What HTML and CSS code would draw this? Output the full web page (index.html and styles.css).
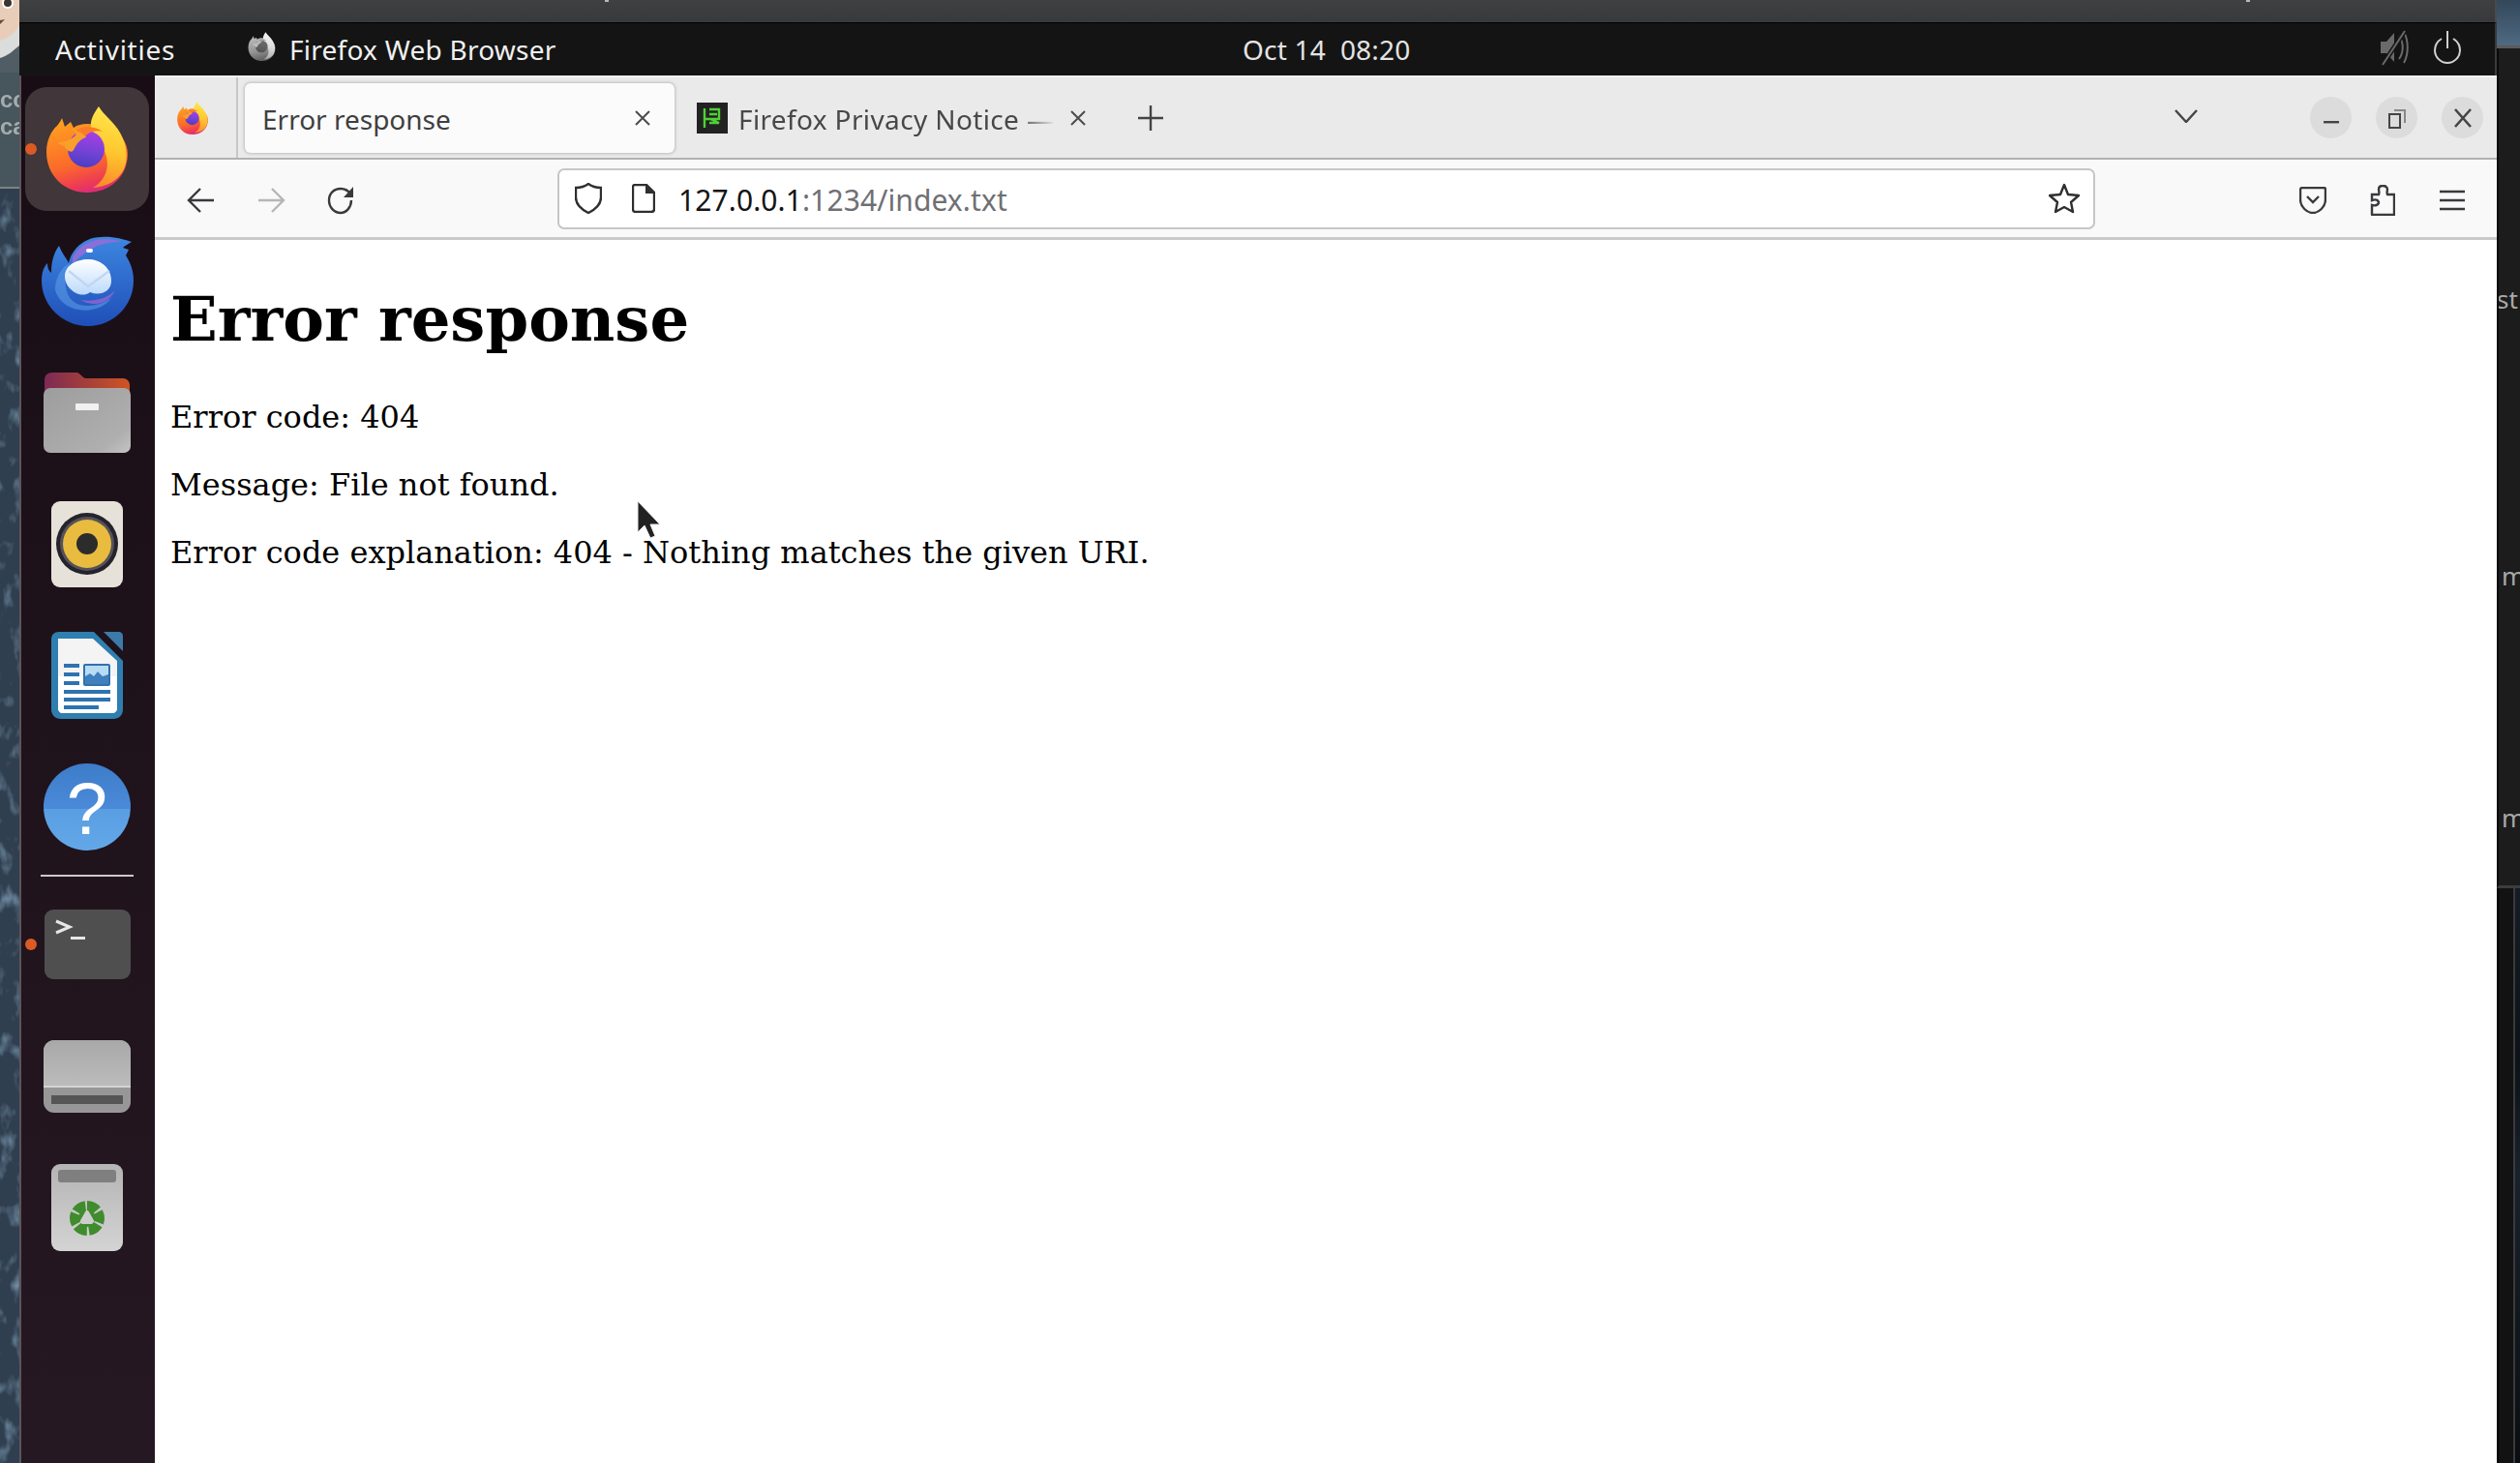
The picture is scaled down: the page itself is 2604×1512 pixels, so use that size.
FILE: index.html
```html
<!DOCTYPE html>
<html lang="en">
<head>
<meta charset="utf-8">
<title>Error response</title>
<link rel="stylesheet" href="styles.css">
</head>
<body>
<svg class="defs" width="0" height="0" aria-hidden="true">
  <defs>
    <linearGradient id="fxBody" x1="0.3" y1="0" x2="0.6" y2="1">
      <stop offset="0" stop-color="#ffa01f"/><stop offset="0.58" stop-color="#fb6a2a"/><stop offset="0.86" stop-color="#ee3a55"/><stop offset="1" stop-color="#d82a80"/>
    </linearGradient>
    <linearGradient id="fxFlame" x1="0.5" y1="0" x2="0.4" y2="1">
      <stop offset="0" stop-color="#ffe94d"/><stop offset="0.55" stop-color="#ffc62e"/><stop offset="1" stop-color="#fb8a2a"/>
    </linearGradient>
    <linearGradient id="fxGlobe" x1="0.6" y1="0" x2="0.4" y2="1">
      <stop offset="0" stop-color="#a83fe6"/><stop offset="0.55" stop-color="#7542d6"/><stop offset="1" stop-color="#4a3ec2"/>
    </linearGradient>
    <linearGradient id="tbBody" x1="0.5" y1="0" x2="0.5" y2="1">
      <stop offset="0" stop-color="#3d86e0"/><stop offset="1" stop-color="#1f4fb8"/>
    </linearGradient>
    <linearGradient id="tbMail" x1="0.5" y1="0" x2="0.5" y2="1">
      <stop offset="0" stop-color="#ffffff"/><stop offset="1" stop-color="#bcd9fb"/>
    </linearGradient>
    <linearGradient id="filesTab" x1="0" y1="0" x2="1" y2="0">
      <stop offset="0" stop-color="#7c2a54"/><stop offset="1" stop-color="#cf5422"/>
    </linearGradient>
    <linearGradient id="filesFront" x1="0" y1="0" x2="1" y2="1">
      <stop offset="0" stop-color="#9d9d9d"/><stop offset="0.8" stop-color="#afafaf"/><stop offset="1" stop-color="#c4c4c4"/>
    </linearGradient>
    <linearGradient id="helpDisc" x1="0.5" y1="0" x2="0.5" y2="1">
      <stop offset="0" stop-color="#3d7cc9"/><stop offset="0.52" stop-color="#4a8ad8"/><stop offset="0.52" stop-color="#5a9ee2"/><stop offset="1" stop-color="#62a8e8"/>
    </linearGradient>
    <linearGradient id="diskTop" x1="0.5" y1="0" x2="0.5" y2="1">
      <stop offset="0" stop-color="#a8a8a8"/><stop offset="1" stop-color="#bcbcbc"/>
    </linearGradient>
    <linearGradient id="trashBody" x1="0.5" y1="0" x2="0.5" y2="1">
      <stop offset="0" stop-color="#b4b4b4"/><stop offset="1" stop-color="#d4d4d4"/>
    </linearGradient>
    <symbol id="firefox" viewBox="0 0 84 90">
      <path fill="url(#fxBody)" d="M16 13 L19 22 L25 17 L28 23 C32 20 37 19 42 19 C64 19 84 30 84 50 C84 74 65 90 42 90 C18 90 0 72 0 48 C0 36 5 26 11 21 C13 18 15 16 16 13Z"/>
      <path fill="url(#fxFlame)" d="M54 1 C59 10 70 17 76 28 C83 40 85 54 80 66 C74 78 62 84 48 85 C60 78 65 66 62 53 C58 38 48 32 46 22 C45 14 50 7 54 1Z"/>
      <circle cx="41" cy="45" r="19" fill="url(#fxGlobe)"/>
      <path fill="#f9a02a" d="M11 39 C18 37 25 36 30 31 C32 28 28 25 25 24 C32 24 39 27 41 33 C34 35 32 39 28 46 C26 50 21 46 19 43 C17 41 14 40 11 39Z"/>
      <path fill="#fb7c28" d="M30 26 C36 22 48 20 58 27 C51 25 44 27 40 32 C38 29 34 27 30 26Z"/>
    </symbol>
    <symbol id="bell-muted" viewBox="0 0 30 38">
      <path fill="#6a6a6a" d="M1 13 H7 L15 4 V34 L7 25 H1Z"/>
      <path fill="none" stroke="#6a6a6a" stroke-width="2" d="M20 7 C25 14 25 24 20 31 M25 3 C30 12 30 26 25 35"/>
      <path fill="none" stroke="#141414" stroke-width="5" d="M3 37 L26 2"/>
      <path fill="none" stroke="#6a6a6a" stroke-width="2" d="M3 37 L26 2"/>
    </symbol>
  </defs>
</svg>

<div class="screen">
  <aside class="left-edge">
    <div class="left-card">
      <svg class="avatar" viewBox="0 0 20 75" width="20" height="75">
        <rect width="20" height="75" fill="#dbdcdc"/>
        <path fill="#e8cdb8" d="M0 0 H20 V26 C16 34 8 40 0 42Z"/>
        <circle cx="8" cy="3" r="6" fill="#fff"/><circle cx="8" cy="3" r="4" fill="#3b3430"/>
        <path fill="#5b4a42" d="M0 21 L5 20 L0 25Z"/>
        <path fill="#505d64" d="M20 47 V75 H0 V60 C8 58 14 52 20 47Z"/>
      </svg>
      <p class="left-word">cc</p>
      <p class="left-word">ca</p>
    </div>
    <svg class="foliage" width="20" height="1317">
      <filter id="leafNoise" x="0" y="0" width="100%" height="100%">
        <feTurbulence type="fractalNoise" baseFrequency="0.09 0.045" numOctaves="3" seed="8"/>
        <feColorMatrix type="matrix" values="0 0 0 0 0.03  0 0 0 0 0.05  0 0 0 0 0.08  0 0 0 0 1"/>
      </filter>
      <filter id="leafHigh" x="0" y="0" width="100%" height="100%">
        <feTurbulence type="fractalNoise" baseFrequency="0.07 0.04" numOctaves="3" seed="23"/>
        <feColorMatrix type="matrix" values="0 0 0 0 0.16  0 0 0 0 0.26  0 0 0 0 0.36  2.6 0 0 0 -1.4"/>
      </filter>
      <rect width="20" height="1317" filter="url(#leafNoise)"/>
      <rect width="20" height="1317" filter="url(#leafHigh)"/>
    </svg>
  </aside>

  <div class="center">
    <div class="strip">
      <span class="strip-mark strip-mark-a"></span>
      <span class="strip-mark strip-mark-b"></span>
    </div>
    <header class="topbar">
      <div class="topbar-left">
        <span class="activities">Activities</span>
        <span class="appmenu">
          <svg class="appmenu-icon" width="29" height="30"><use href="#firefox"/></svg>
          <span class="appmenu-name">Firefox Web Browser</span>
        </span>
      </div>
      <span class="clock">Oct 14&nbsp; 08:20</span>
      <div class="tray">
        <svg width="30" height="38"><use href="#bell-muted"/></svg>
        <svg width="28" height="36" viewBox="0 0 28 36" fill="none" stroke="#cfcfcf" stroke-width="2">
          <path d="M8 9 C3 12 1 16 1 21 C1 28 7 34 14 34 C21 34 27 28 27 21 C27 16 25 12 20 9"/>
          <path d="M14 1 V19"/>
        </svg>
      </div>
    </header>

    <div class="work">
      <nav class="dock">
        <div class="slot">
          <span class="run-dot"></span>
          <div class="fx-tile"><svg width="84" height="90"><use href="#firefox"/></svg></div>
        </div>
        <div class="slot">
          <svg width="95" height="93" viewBox="0 0 95 93">
            <path fill="url(#tbBody)" d="M18 10 C21 18 26 23 28 28 C30 16 42 1 62 1 C72 0 84 3 93 6 C88 9 86 10 84 12 L90 14 L87 20 C92 28 95 36 95 46 C95 72 74 93 48 93 C22 93 0 72 0 46 C0 38 2 32 6 28 C6 34 8 36 10 38 C10 28 12 18 18 10Z"/>
            <path fill="#8a6fd8" d="M32 22 C38 10 50 4 64 3 C72 3 78 4 82 6 C70 6 60 8 52 13 C46 17 38 21 32 30Z"/>
            <path fill="#5fa0ea" d="M14 56 C14 42 22 30 30 28 C24 36 22 50 28 62 C36 76 58 74 72 64 C60 82 22 82 14 56Z" opacity="0.55"/>
            <rect x="46" y="13" width="7" height="4" rx="2" fill="#fff"/>
            <path fill="url(#tbMail)" d="M24 42 C24 30 36 24 48 24 C60 24 72 32 72 46 C72 58 60 62 50 58 C40 66 24 54 24 42Z"/>
            <path fill="none" stroke="#c0d6f3" stroke-width="2.4" d="M28 36 L48 52 L70 36"/>
            <path fill="#7f63d2" d="M40 66 C52 68 66 66 76 56 C70 70 54 74 40 66Z"/>
          </svg>
        </div>
        <div class="slot">
          <svg width="90" height="83" viewBox="0 0 90 83">
            <path fill="url(#filesTab)" d="M1 8 C1 3 4 0 9 0 H34 C38 0 40 6 44 6 H82 C86 6 89 9 89 13 V30 H1Z"/>
            <rect x="0" y="16" width="90" height="67" rx="7" fill="url(#filesFront)"/>
            <rect x="33" y="32" width="24" height="7" rx="1" fill="#f1f1f1"/>
          </svg>
        </div>
        <div class="slot">
          <svg width="74" height="89" viewBox="0 0 74 89">
            <rect width="74" height="89" rx="9" fill="#e6e2da"/>
            <circle cx="37" cy="44" r="32" fill="#25232b"/>
            <circle cx="37" cy="44" r="28" fill="#55525a"/>
            <circle cx="37" cy="44" r="25" fill="#e9bc3f"/>
            <circle cx="37" cy="44" r="11" fill="#2d2c2c"/>
          </svg>
        </div>
        <div class="slot">
          <svg width="74" height="90" viewBox="0 0 74 90">
            <path fill="#2f7eb0" d="M8 0 H44 L74 30 V80 C74 86 70 90 64 90 H10 C4 90 0 86 0 80 V8 C0 3 3 0 8 0Z"/>
            <path fill="#3c7aa9" d="M54 0 H70 C72 0 74 2 74 4 V20Z"/>
            <path fill="#f4f4f4" d="M7 7 H43 L68 30 V78 C68 82 66 84 62 84 H12 C9 84 7 82 7 78Z"/>
            <path fill="#fff" d="M7 46 H68 V78 C68 82 66 84 62 84 H12 C9 84 7 82 7 78Z"/>
            <path fill="#2f72b0" d="M13 34 H29 V38 H13Z M13 43 H29 V47 H13Z M13 52 H29 V56 H13Z M13 61 H61 V65 H13Z M13 69 H61 V73 H13Z M13 77 H49 V81 H13Z" transform="translate(0,-1)"/>
            <rect x="34" y="34" width="26" height="21" rx="1" fill="#b9dcf5" stroke="#2f72b0" stroke-width="2"/>
            <path fill="#3f7fbb" d="M35 54 V46 L40 43 L44 46 L48 41 L53 46 L59 44 V54Z"/>
          </svg>
        </div>
        <div class="slot">
          <svg width="90" height="90" viewBox="0 0 90 90">
            <circle cx="45" cy="45" r="45" fill="url(#helpDisc)"/>
            <text class="help-mark" x="45" y="73" text-anchor="middle">?</text>
          </svg>
        </div>
        <div class="dock-sep"></div>
        <div class="slot">
          <span class="run-dot"></span>
          <svg width="89" height="72" viewBox="0 0 89 72">
            <rect width="89" height="72" rx="9" fill="#4f4f4f"/>
            <path fill="none" stroke="#e6e6e6" stroke-width="3" d="M12 12 L26 18 L12 24"/>
            <rect x="27" y="28" width="15" height="3" fill="#e6e6e6"/>
          </svg>
        </div>
        <div class="slot">
          <svg width="90" height="75" viewBox="0 0 90 75">
            <rect width="90" height="75" rx="11" fill="#979797"/>
            <path fill="url(#diskTop)" d="M11 0 H79 C85 0 90 5 90 11 V48 H0 V11 C0 5 5 0 11 0Z"/>
            <rect y="47" width="90" height="2" fill="#d4d4d4"/>
            <rect x="8" y="57" width="74" height="9" fill="#555"/>
          </svg>
        </div>
        <div class="slot">
          <svg width="74" height="90" viewBox="0 0 74 90">
            <rect width="74" height="90" rx="9" fill="url(#trashBody)"/>
            <rect x="7" y="6" width="60" height="13" rx="3" fill="#7f7f7f"/>
            <circle cx="37" cy="56" r="9" fill="#3f8c2d"/>
            <path fill="#cdcdcd" d="M37 46 L46 62 H28Z"/>
            <circle cx="37" cy="56" r="13" fill="none" stroke="#3f8c2d" stroke-width="10" stroke-dasharray="11.4 2.2" transform="rotate(-90 37 56)"/>
          </svg>
        </div>
      </nav>

      <main class="window">
        <div class="tabbar">
          <div class="view-btn"><svg width="32" height="34"><use href="#firefox"/></svg></div>
          <div class="tab tab-active">
            <span class="tab-title">Error response</span>
            <svg class="tab-x" width="18" height="18" viewBox="0 0 18 18"><path d="M2 2 L16 16 M16 2 L2 16"/></svg>
          </div>
          <div class="tab tab-other">
            <svg class="favicon" width="32" height="32" viewBox="0 0 32 32">
              <rect width="32" height="32" fill="#222"/>
              <path fill="none" stroke="#4fd035" stroke-width="2.4" d="M8 6 V26 M8 17 H23 V7 H13 M13 12 H21 M14 17 L23 21 H13"/>
            </svg>
            <span class="tab-title tab-title-fade">Firefox Privacy Notice —</span>
            <svg class="tab-x" width="18" height="18" viewBox="0 0 18 18"><path d="M2 2 L16 16 M16 2 L2 16"/></svg>
          </div>
          <svg class="new-tab" width="26" height="26" viewBox="0 0 26 26"><path d="M13 0 V26 M0 13 H26"/></svg>
          <svg class="tab-list" width="24" height="14" viewBox="0 0 24 14"><path d="M1 1 L12 13 L23 1"/></svg>
          <div class="win-btn win-btn-first">
            <svg width="16" height="16" viewBox="0 0 16 16"><rect y="11" width="16" height="2.4"/></svg>
          </div>
          <div class="win-btn">
            <svg width="18" height="22" viewBox="0 0 18 22" fill="none" stroke="#444" stroke-width="2"><rect x="1" y="7" width="11" height="14"/><path d="M6 3 H17 V16" stroke="#888"/></svg>
          </div>
          <div class="win-btn">
            <svg width="18" height="20" viewBox="0 0 18 20" fill="none" stroke="#444" stroke-width="2.6"><path d="M1 1 L17 19 M17 1 L1 19"/></svg>
          </div>
        </div>

        <div class="toolbar">
          <button class="tool tool-first"><svg width="30" height="28" viewBox="0 0 30 28"><path d="M28 14 H3 M14 2 L2 14 L14 26"/></svg></button>
          <button class="tool tool-off"><svg width="30" height="28" viewBox="0 0 30 28"><path d="M2 14 H27 M16 2 L28 14 L16 26"/></svg></button>
          <button class="tool"><svg width="28" height="30" viewBox="0 0 28 30"><path d="M25 15 C25 22 20 28 14 28 C7 28 2 22 2 15 C2 8 7 3 14 3 C19 3 22 5 25 9"/><path class="solid" d="M27 1 V12 H17Z"/></svg></button>
          <div class="urlbar">
            <svg class="url-shield" width="28" height="32" viewBox="0 0 28 32"><path d="M14 1 C18 4 22 5 27 5 V15 C27 23 20 28 14 31 C8 28 1 23 1 15 V5 C6 5 10 4 14 1Z"/></svg>
            <svg class="url-page" width="24" height="30" viewBox="0 0 24 30"><path d="M3 1 H15 L23 9 V26 C23 28 22 29 20 29 H4 C2 29 1 28 1 26 V3 C1 2 2 1 3 1Z"/><path class="solid" d="M14 1 L23 10 H14Z"/></svg>
            <span class="url-text"><span class="url-host">127.0.0.1</span>:1234/index.txt</span>
            <svg class="url-star" width="32" height="32" viewBox="0 0 32 32"><path d="M16 2 L20 12 L31 13 L23 20 L25 30 L16 25 L7 30 L9 20 L1 13 L12 12Z"/></svg>
          </div>
          <button class="tool tool-pocket"><svg width="28" height="28" viewBox="0 0 28 28"><path d="M3 1 H25 C26 1 27 2 27 3 V13 C27 21 20 27 14 27 C8 27 1 21 1 13 V3 C1 2 2 1 3 1Z"/><path d="M8 10 L14 16 L20 10"/></svg></button>
          <button class="tool"><svg width="26" height="32" viewBox="0 0 26 32"><path d="M1 31 H25 V10 H18 C17 8 18 6 18 5 C18 2 16 1 13 1 C10 1 9 2 9 5 C9 6 10 8 9 10 H2 V16 C5 15 8 15 9 18 C9 21 5 22 2 21 V31Z"/></svg></button>
          <button class="tool"><svg width="26" height="24" viewBox="0 0 26 24"><path d="M0 3 H26 M0 12 H26 M0 21 H26"/></svg></button>
        </div>

        <article class="page">
          <h1 class="page-title">Error response</h1>
          <p class="page-line">Error code: 404</p>
          <p class="page-line">Message: File not found.</p>
          <p class="page-line">Error code explanation: 404 - Nothing matches the given URI.</p>
          <svg class="cursor" width="26" height="42" viewBox="0 0 26 42"><path d="M1 1 V33 L8 26 L14 39 L19 37 L14 25 H24Z"/></svg>
        </article>
      </main>
    </div>
  </div>

  <aside class="right-edge">
    <div class="right-photo"></div>
    <div class="right-panel">
      <span class="right-word right-word-st">st</span>
      <span class="right-word right-word-m1">m</span>
      <span class="right-word right-word-m2">m</span>
    </div>
    <div class="right-bottom">
      <div class="right-bottom-dark"></div>
      <div class="right-bottom-photo"></div>
    </div>
  </aside>
</div>
</body>
</html>
```

FILE: styles.css
```css
* { box-sizing: border-box; }
html, body { margin: 0; padding: 0; height: 100%; overflow: hidden; background: #111; }
.defs { position: absolute; }
svg { display: block; flex: none; }

.screen { display: flex; width: 2604px; height: 1512px; font-family: "Noto Sans", "Open Sans", sans-serif; }

/* left wallpaper sliver */
.left-edge { width: 20px; flex: none; display: flex; flex-direction: column; overflow: hidden; background: #0e1a28; }
.left-card { height: 195px; flex: none; background: #47555c; overflow: hidden; border-bottom: 2px solid #7b8386; }
.avatar { filter: blur(0.6px); }
.left-word { margin: 0; width: 20px; height: 28px; font-family: "Liberation Sans", sans-serif; font-size: 24px; line-height: 28px; font-weight: 700; color: #a4acaf; white-space: nowrap; overflow: hidden; filter: blur(0.5px); }
.left-word:first-of-type { margin-top: 14px; }
.foliage { flex: none; }

/* centre column */
.center { width: 2560px; flex: none; display: flex; flex-direction: column; }
.strip { height: 24px; flex: none; background: linear-gradient(#3f4042, #38393b); border-bottom: 1px solid #000; border-right: 2px solid #4a4a4b; display: flex; }
.strip-mark { width: 4px; height: 2px; background: #b8b8b8; }
.strip-mark-a { margin-left: 605px; }
.strip-mark-b { margin-left: 1692px; }

.topbar { height: 54px; flex: none; background: #141414; border-right: 2px solid #3b3b3b; display: flex; align-items: center; color: #f1f1f1; font-size: 28px; }
.topbar-left { width: 1264px; flex: none; padding-left: 37px; display: flex; align-items: center; }
.activities { width: 199px; letter-spacing: 0.75px; }
.appmenu { display: flex; align-items: center; gap: 14px; }
.appmenu-name { letter-spacing: 0.25px; }
.appmenu-icon { filter: grayscale(1) brightness(1.1); margin-top: -6px; }
.clock { color: #e4e4e4; letter-spacing: 0.2px; }
.tray { margin-left: auto; padding-right: 35px; display: flex; align-items: center; gap: 26px; margin-top: -4px; }

.work { flex: 1; display: flex; min-height: 0; }

/* dock */
.dock { width: 140px; flex: none; padding-top: 8px; display: flex; flex-direction: column; background: linear-gradient(#190d15, #251822); border-left: 2px solid #5d555a; }
.slot { width: 136px; height: 136px; flex: none; position: relative; display: flex; align-items: center; justify-content: center; }
.fx-tile { width: 128px; height: 128px; border-radius: 22px; background: #413639; display: flex; align-items: center; justify-content: center; }
.run-dot { position: absolute; left: 4px; top: 62px; width: 12px; height: 12px; border-radius: 50%; background: #dc5a25; z-index: 1; }
.dock-sep { height: 2px; width: 96px; margin: 2px 0 2px 20px; background: #cdc8ca; flex: none; }
.help-mark { font-family: "Liberation Sans", sans-serif; font-size: 76px; fill: #fff; }

/* window */
.window { flex: 1; min-width: 0; display: flex; flex-direction: column; background: #fff; }
.tabbar { height: 87px; flex: none; display: flex; align-items: center; background: #eaeaea; border-top: 2px solid #f6f6f6; border-bottom: 2px solid #b2b2b2; color: #3a3a3c; }
.view-btn { width: 86px; height: 100%; flex: none; display: flex; align-items: center; justify-content: center; border-right: 2px solid #c6c6c6; padding-right: 6px; }
.tab { display: flex; align-items: center; height: 72px; flex: none; font-size: 28px; }
.tab-active { width: 444px; margin-left: 7px; margin-top: 1px; padding: 0 24px 0 18px; background: #fbfbfb; border-radius: 6px; box-shadow: 0 0 3px 1px #bdbdbd; }
.tab-title { white-space: nowrap; margin-top: 3px; }
.tab-active .tab-title { flex: 1; margin-top: 1px; color: #3f3f42; }
.tab-other { width: 426px; padding-left: 23px; }
.favicon { margin-right: 11px; }
.tab-title-fade { width: 328px; overflow: hidden; color: #48484b; letter-spacing: 0.37px; -webkit-mask-image: linear-gradient(to right, #000 88%, transparent 100%); mask-image: linear-gradient(to right, #000 88%, transparent 100%); }
.tab-x { fill: none; stroke: #4c4c4c; stroke-width: 2; }
.tab-other .tab-x { margin-left: 14px; }
.new-tab { margin-left: 53px; fill: none; stroke: #444; stroke-width: 2.4; }
.tab-list { margin-left: 1045px; fill: none; stroke: #444; stroke-width: 2.4; margin-top: -4px; }
.win-btn { width: 43px; height: 43px; flex: none; border-radius: 50%; background: #dcdcdc; display: flex; align-items: center; justify-content: center; margin-left: 25px; fill: #444; }
.win-btn-first { margin-left: 116px; }

.toolbar { height: 83px; flex: none; display: flex; align-items: center; padding-left: 26px; background: #f9f9fa; border-bottom: 3px solid #c9c9c9; }
.tool { width: 44px; height: 44px; flex: none; padding: 0; margin: 3px 14px 0; border: 0; background: none; display: flex; align-items: center; justify-content: center; }
.tool-first { margin-left: 0; }
.tool svg { fill: none; stroke: #3a3a3c; stroke-width: 2.4; }
.tool .solid { fill: #3a3a3c; stroke: none; }
.tool-off svg { stroke: #b6b6b8; }
.tool-pocket { margin-left: 203px; }

.urlbar { width: 1589px; height: 63px; margin-left: 188px; flex: none; display: flex; align-items: center; background: #fff; border: 2px solid #c6c6c6; border-radius: 7px; padding-left: 16px; font-size: 30px; color: #6f6f73; }
.urlbar svg { fill: none; stroke: #2f2f31; stroke-width: 2.4; }
.urlbar .solid { fill: #2f2f31; stroke: none; }
.url-page { margin-left: 31px; }
.url-text { margin-left: 24px; margin-top: 3px; white-space: nowrap; letter-spacing: 0.1px; }
.url-host { color: #141416; }
.url-star { margin-left: auto; margin-right: 14px; stroke-linejoin: round; }

.page { flex: 1; position: relative; background: #fff; padding: 45px 16px 0; font-family: "DejaVu Serif", "Liberation Serif", serif; color: #000; }
.page-title { margin: 0 0 45px; font-size: 64px; line-height: 74px; font-weight: 700; }
.page-line { margin: 0 0 32px; font-size: 32px; line-height: 38px; }
.cursor { position: absolute; left: 498px; top: 269px; fill: #222; stroke: #eee; stroke-width: 1; }

/* right sliver */
.right-edge { width: 24px; flex: none; display: flex; flex-direction: column; overflow: hidden; }
.right-photo { height: 50px; flex: none; background: linear-gradient(#33475a, #4f6a82); border-bottom: 3px solid #5a5a5c; }
.right-panel { height: 868px; flex: none; background: #1c1c1d; border-left: 2px solid #0a0a0a; border-bottom: 3px solid #3c3c3e; display: flex; flex-direction: column; color: #a8a8a8; font-size: 26px; line-height: 30px; overflow: hidden; }
.right-word { display: block; height: 30px; white-space: nowrap; }
.right-word-st { margin-top: 244px; margin-left: -2px; }
.right-word-m1 { margin-top: 256px; margin-left: 3px; }
.right-word-m2 { margin-top: 220px; margin-left: 3px; }
.right-bottom { flex: 1; display: flex; }
.right-bottom-dark { width: 19px; flex: none; background: #121212; border-left: 2px solid #050505; border-right: 2px solid #3a3a3c; }
.right-bottom-photo { flex: 1; background: linear-gradient(#141d26, #0c1218 30%, #17222c 50%, #0a0e12); }
```
